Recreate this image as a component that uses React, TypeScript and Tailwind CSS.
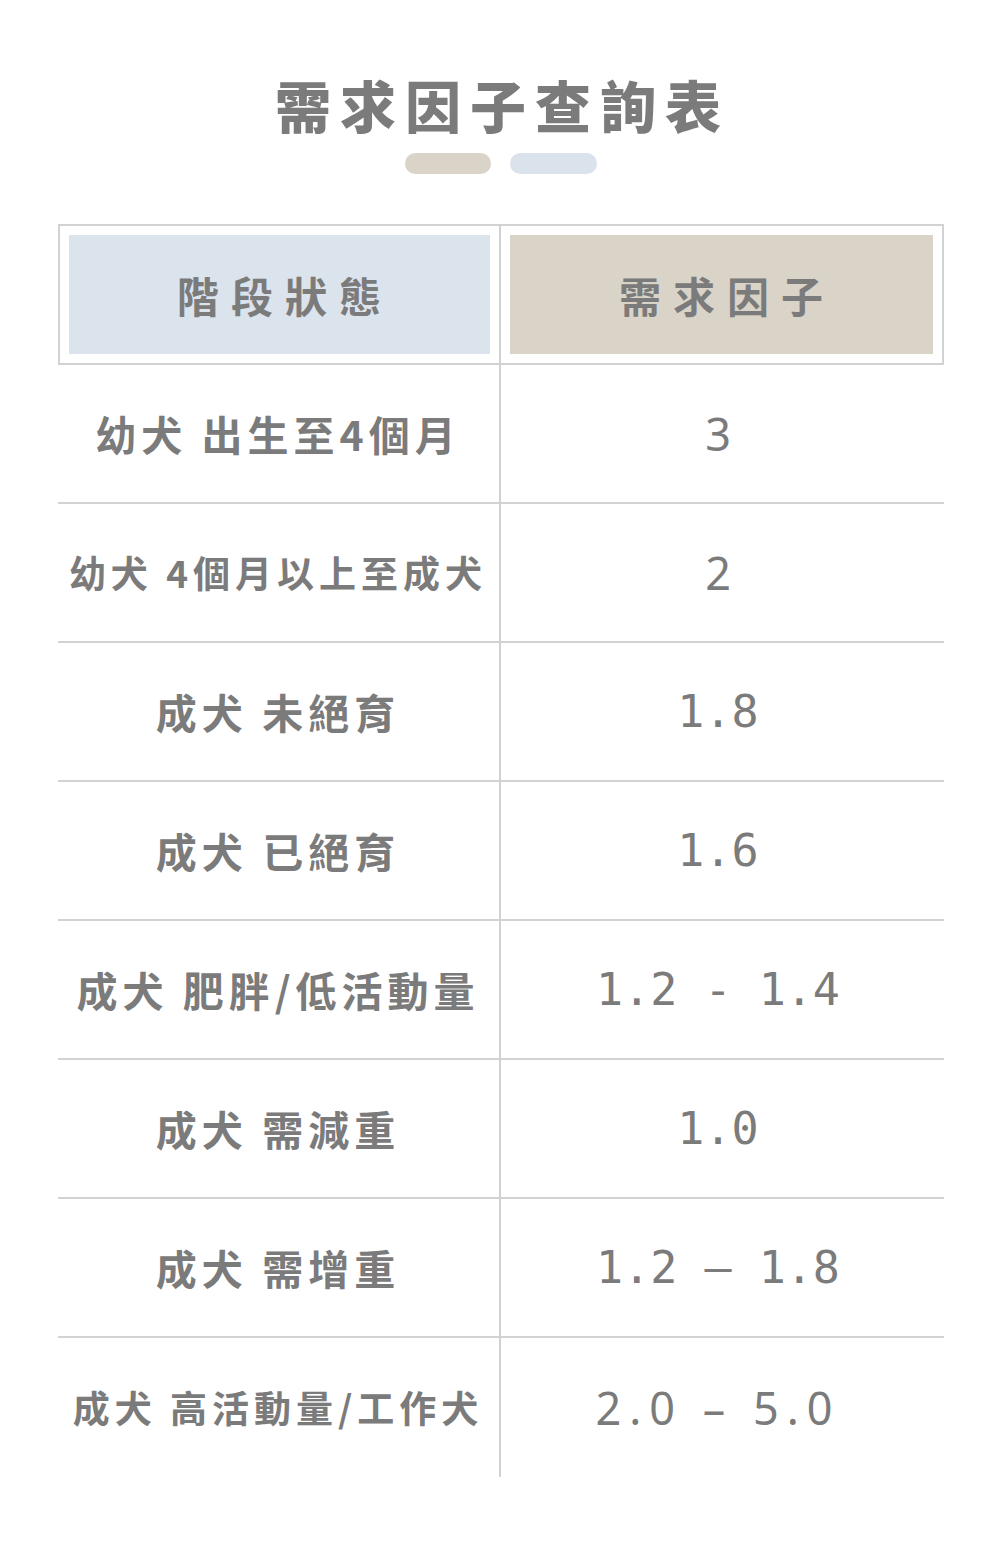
const CJK = "font-['Noto_Sans_CJK_TC','Noto_Sans_CJK_SC',sans-serif]";

type Row = { label: string; size: "lg" | "sm"; value: string; font: "sans" | "mono" | "wide" };

const ROWS: Row[] = [
  { label: "幼犬 出生至4個月", size: "lg", value: "3", font: "sans" },
  { label: "幼犬 4個月以上至成犬", size: "sm", value: "2", font: "sans" },
  { label: "成犬 未絕育", size: "lg", value: "1.8", font: "mono" },
  { label: "成犬 已絕育", size: "lg", value: "1.6", font: "mono" },
  { label: "成犬 肥胖/低活動量", size: "lg", value: "1.2 - 1.4", font: "mono" },
  { label: "成犬 需減重", size: "lg", value: "1.0", font: "mono" },
  { label: "成犬 需增重", size: "lg", value: "1.2 – 1.8", font: "mono" },
  { label: "成犬 高活動量/工作犬", size: "sm", value: "2.0 – 5.0", font: "wide" },
];

function Value({ row }: { row: Row }) {
  if (row.font === "mono")
    return <span className="whitespace-pre font-['DejaVu_Sans_Mono',monospace] text-[45px] leading-none">{row.value}</span>;
  if (row.font === "wide")
    return <span className="whitespace-pre font-['Noto_Sans',sans-serif] text-[45px] leading-none tracking-[8px]">{row.value}</span>;
  return <span className="font-['Noto_Sans',sans-serif] text-[45px] leading-none">{row.value}</span>;
}

export default function App() {
  return (
    <div className="min-h-[1565px] bg-white pt-[76px] text-[#7b7b7b]">
      <h1 className={`${CJK} pl-[4px] text-center text-[56px] font-black leading-none tracking-[9px]`}>需求因子查詢表</h1>
      <div className="mt-[21px] flex justify-center gap-[19px]">
        <span className="h-[21px] w-[86px] rounded-full bg-[#d9d3c8]" />
        <span className="h-[21px] w-[87px] rounded-full bg-[#dae2eb]" />
      </div>

      <div className="mx-auto mt-[50px] w-[886px]">
        <div className="grid grid-cols-2 border-2 border-[#d2d2d2]">
          <div className="border-r-2 border-[#d2d2d2] p-[9px]">
            <div className={`${CJK} flex h-[119px] items-center justify-center bg-[#dbe3ec] pl-[12px] text-[42px] font-bold tracking-[12px]`}>階段狀態</div>
          </div>
          <div className="p-[9px]">
            <div className={`${CJK} flex h-[119px] items-center justify-center bg-[#d9d3c8] pl-[12px] text-[42px] font-bold tracking-[12px]`}>需求因子</div>
          </div>
        </div>

        {ROWS.map((r, i) => (
          <div key={r.label} className={`grid h-[139px] grid-cols-2 ${i < ROWS.length - 1 ? "border-b-2 border-[#d2d2d2]" : ""}`}>
            <div className="flex items-center justify-center border-r-2 border-[#d2d2d2]">
              <span className={`${CJK} whitespace-pre font-bold leading-none ${r.size === "lg" ? "text-[41px] tracking-[5px]" : "text-[37px] tracking-[5px]"}`}>
                {r.label}
              </span>
            </div>
            <div className="flex items-center justify-center pr-[8px]">
              <Value row={r} />
            </div>
          </div>
        ))}
      </div>
    </div>
  );
}
